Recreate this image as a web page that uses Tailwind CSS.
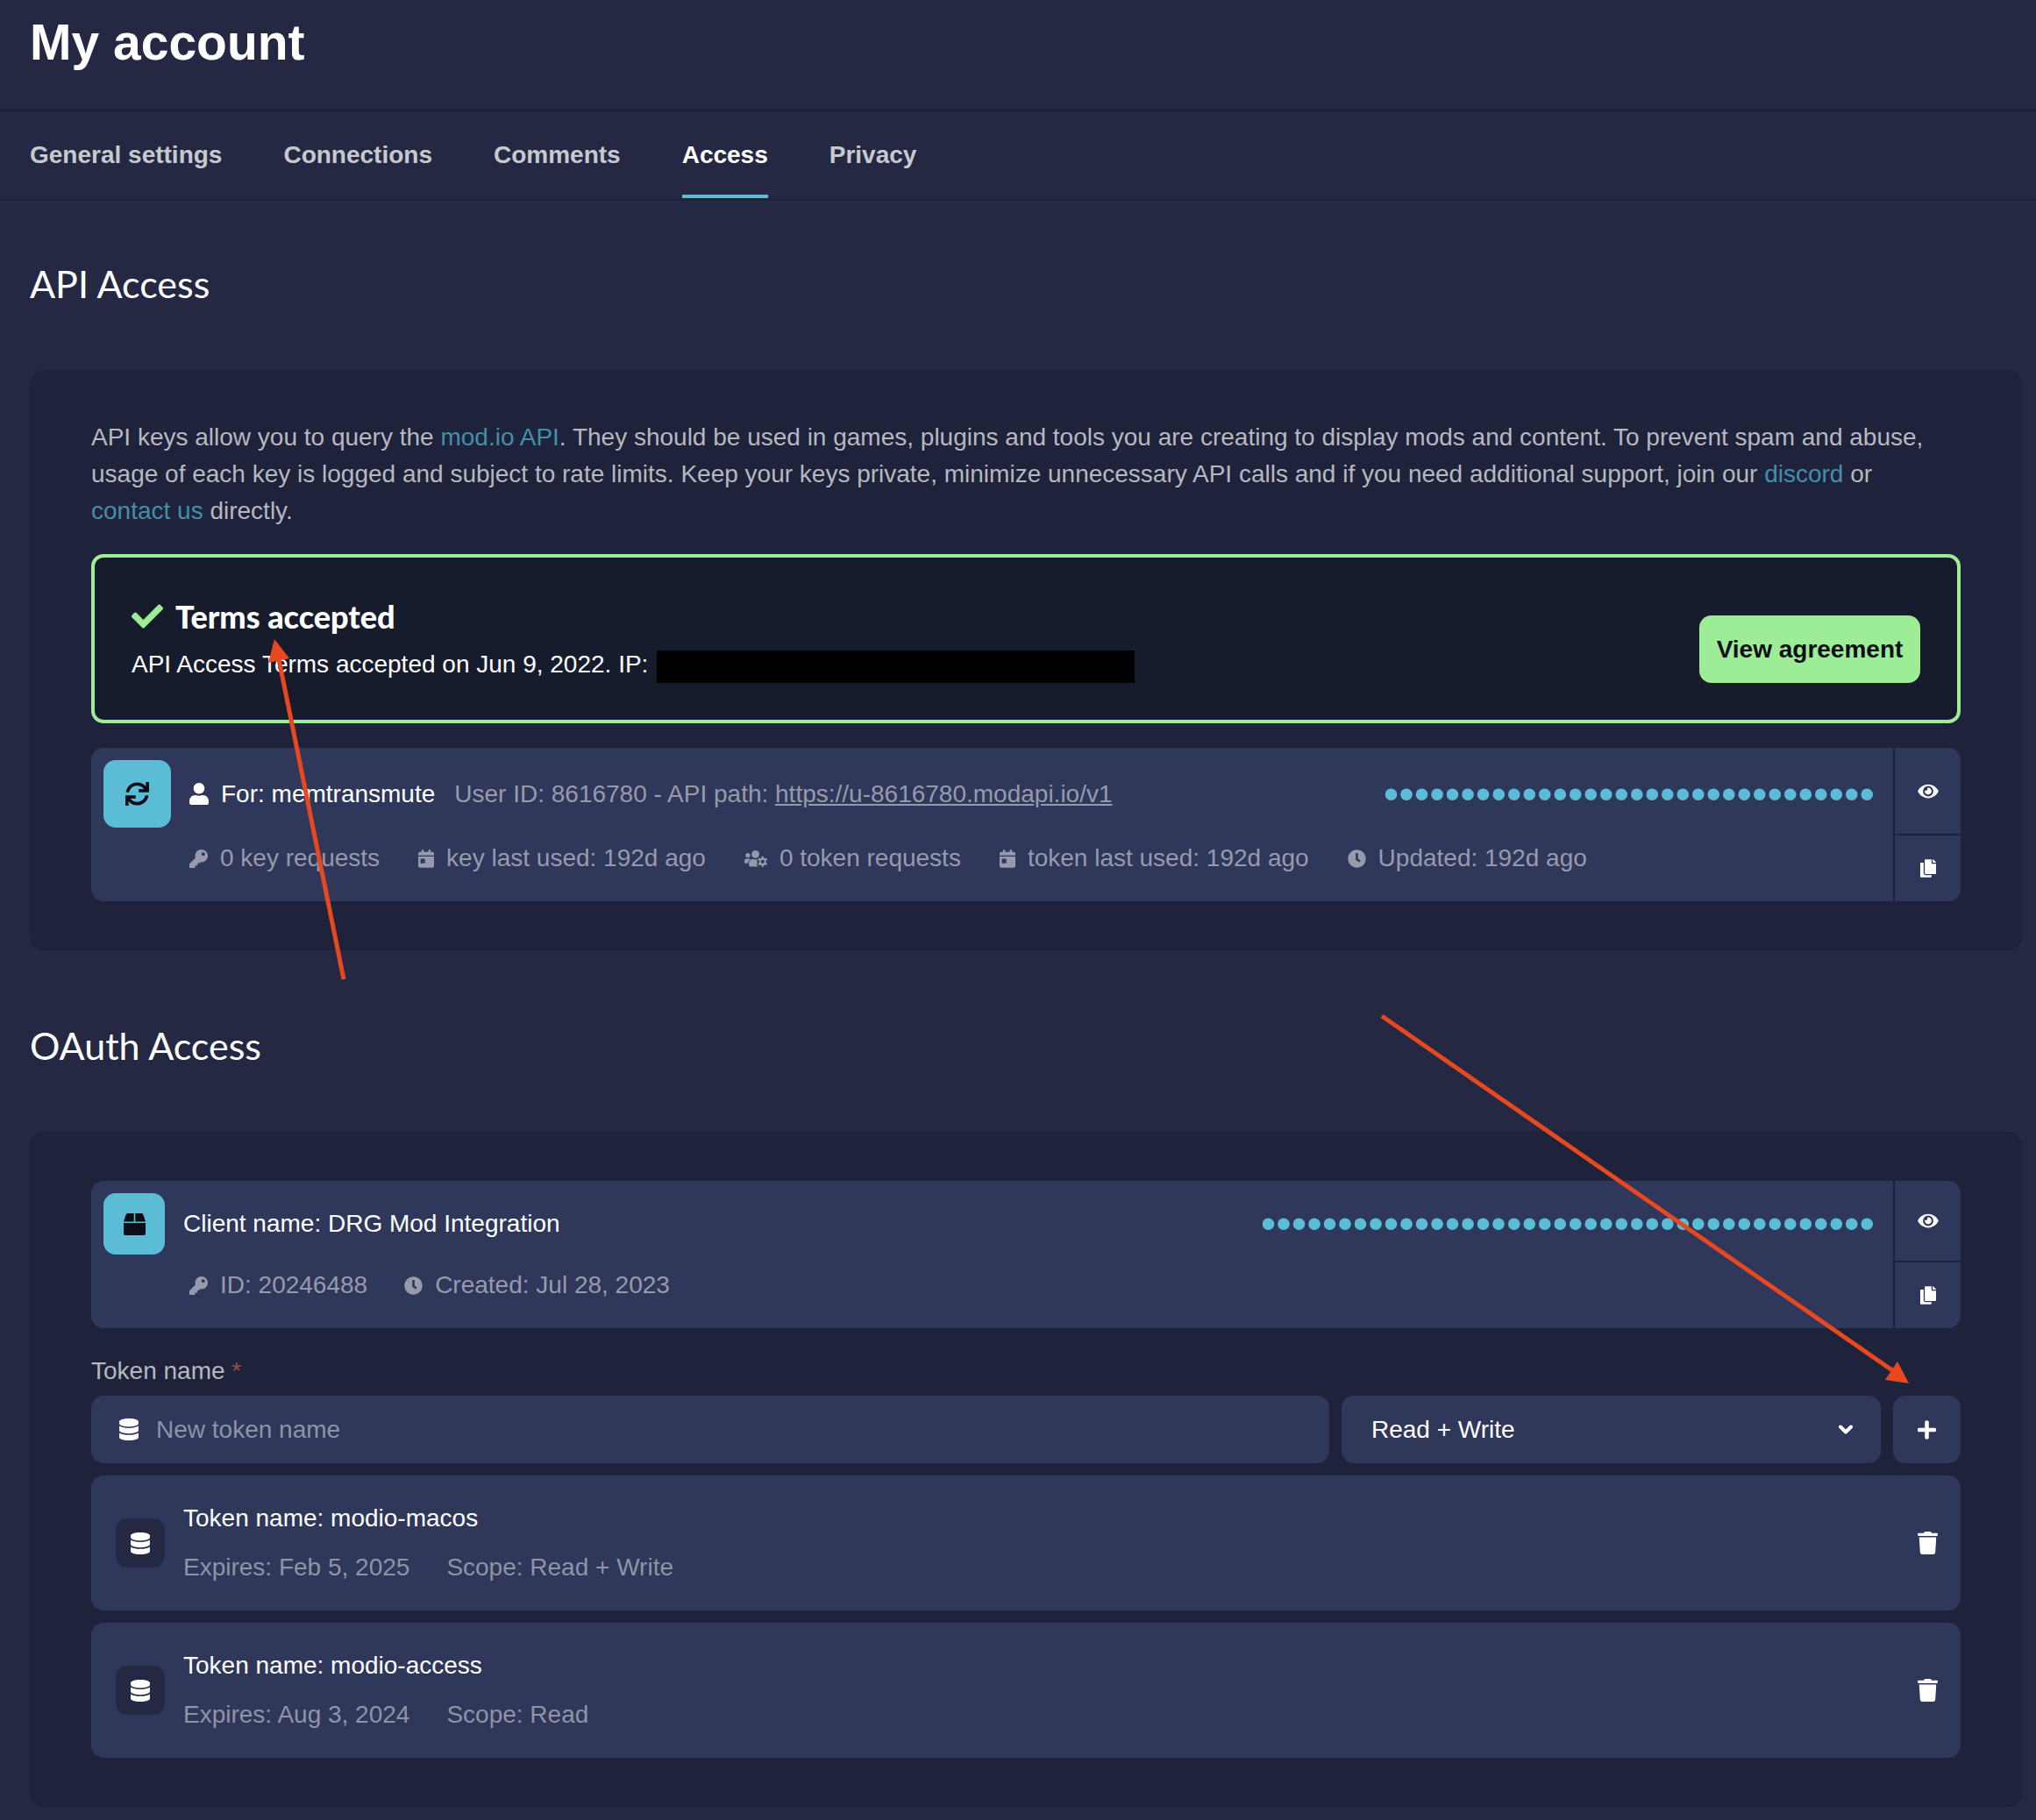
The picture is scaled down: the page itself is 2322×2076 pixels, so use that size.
<!DOCTYPE html>
<html lang="en" class="bg-[#242842]">
<head>
<meta charset="utf-8">
<meta name="viewport" content="width=device-width, initial-scale=1">
<title>My account</title>
<script src="https://cdn.jsdelivr.net/npm/@tailwindcss/browser@4"></script>
</head>
<body class="relative bg-[#242842] pb-[15px] font-['Liberation_Sans',Arial,sans-serif] text-[28px] leading-[42px] text-white">

<!-- Icon set -->
<svg class="hidden" aria-hidden="true">
  <symbol id="check" viewBox="0 0 512 512"><path d="M173.898 439.404l-166.4-166.4c-9.997-9.997-9.997-26.206 0-36.204l36.203-36.204c9.997-9.998 26.207-9.998 36.204 0L192 312.69 432.095 72.596c9.997-9.997 26.207-9.997 36.204 0l36.203 36.204c9.997 9.997 9.997 26.206 0 36.204l-294.4 294.401c-9.998 9.997-26.207 9.997-36.204-.001z"/></symbol>
  <symbol id="sync" viewBox="0 0 512 512"><path d="M440.65 12.57l4 82.77A247.16 247.16 0 0 0 255.83 8C134.73 8 33.91 94.92 12.29 209.82A12 12 0 0 0 24.09 224h49.05a12 12 0 0 0 11.67-9.26 175.91 175.91 0 0 1 317-56.94l-101.46-4.86a12 12 0 0 0-12.57 12v47.41a12 12 0 0 0 12 12H500a12 12 0 0 0 12-12V12a12 12 0 0 0-12-12h-47.37a12 12 0 0 0-11.98 12.57zM255.83 432a175.61 175.61 0 0 1-146-77.8l101.8 4.87a12 12 0 0 0 12.57-12v-47.4a12 12 0 0 0-12-12H12a12 12 0 0 0-12 12V500a12 12 0 0 0 12 12h47.35a12 12 0 0 0 12-12.6l-4.15-82.57A247.17 247.17 0 0 0 255.83 504c121.11 0 221.93-86.92 243.55-201.82a12 12 0 0 0-11.8-14.18h-49.05a12 12 0 0 0-11.67 9.26A175.86 175.86 0 0 1 255.83 432z"/></symbol>
  <symbol id="user" viewBox="0 0 448 512"><path d="M224 256c70.7 0 128-57.3 128-128S294.7 0 224 0 96 57.3 96 128s57.3 128 128 128zm89.600 32h-16.700c-22.200 10.200-46.900 16-72.900 16s-50.600-5.800-72.900-16h-16.700C60.200 288 0 348.200 0 422.400V464c0 26.500 21.500 48 48 48h352c26.500 0 48-21.500 48-48v-41.600c0-74.200-60.200-134.400-134.400-134.400z"/></symbol>
  <symbol id="key" viewBox="0 0 512 512"><path d="M512 176.001C512 273.203 433.202 352 336 352c-11.220 0-22.190-1.062-32.827-3.069l-24.012 27.014A23.999 23.999 0 0 1 261.223 384H224v40c0 13.255-10.745 24-24 24h-40v40c0 13.255-10.745 24-24 24H24c-13.255 0-24-10.745-24-24v-78.059c0-6.365 2.529-12.470 7.029-16.971l161.802-161.802C163.108 213.814 160 195.271 160 176 160 78.798 238.797.001 335.999 0 433.488-.001 512 78.511 512 176.001zM336 128c0 26.510 21.490 48 48 48s48-21.490 48-48-21.490-48-48-48-48 21.490-48 48z"/></symbol>
  <symbol id="calendar" viewBox="0 0 448 512"><path d="M0 464c0 26.500 21.500 48 48 48h352c26.500 0 48-21.500 48-48V192H0v272zm64-192c0-8.800 7.200-16 16-16h96c8.800 0 16 7.200 16 16v96c0 8.800-7.200 16-16 16H80c-8.800 0-16-7.200-16-16v-96zM400 64h-48V16c0-8.800-7.200-16-16-16h-32c-8.800 0-16 7.200-16 16v48H160V16c0-8.800-7.200-16-16-16h-32c-8.800 0-16 7.200-16 16v48H48C21.500 64 0 85.500 0 112v48h448v-48c0-26.500-21.500-48-48-48z"/></symbol>
  <symbol id="users-cog" viewBox="0 0 640 512"><circle cx="96" cy="160" r="64"/><circle cx="310" cy="128" r="108"/><path d="M64 256h64c18 0 34 7 45 19-40 22-69 62-75 109H32c-18 0-32-14-32-32v-32c0-35 29-64 64-64z"/><path d="M243 266h9c43 21 83 21 120 4-14 14-22 34-20 52 6 14 8 20 14 26-4 10-4 20 0 30-18 14-26 34-14 56 10 20 22 36 36 46H176c-27 0-48-21-48-48v-51c0-64 52-115 115-115z"/><path fill-rule="evenodd" d="M484 190h52l8 46 26 14 44-16 26 46-36 30v56l36 30-26 46-44-16-26 14-8 46h-52l-8-46-26-14-44 16-26-46 36-30v-56l-36-30 26-46 44 16 26-14zM510 286a52 52 0 1 0 0 104 52 52 0 0 0 0-104z"/></symbol>
  <symbol id="clock" viewBox="0 0 512 512"><path d="M256,8C119,8,8,119,8,256S119,504,256,504,504,393,504,256,393,8,256,8Zm92.490,313h0l-20,25a16,16,0,0,1-22.490,2.500h0l-67-49.720a40,40,0,0,1-15-31.230V112a16,16,0,0,1,16-16h32a16,16,0,0,1,16,16V256l58,42.500A16,16,0,0,1,348.490,321Z"/></symbol>
  <symbol id="eye" viewBox="0 0 576 512"><path d="M572.520 241.400C518.290 135.590 410.930 64 288 64S57.680 135.640 3.480 241.410a32.350 32.350 0 0 0 0 29.190C57.710 376.410 165.070 448 288 448s230.320-71.640 284.520-177.410a32.350 32.350 0 0 0 0-29.190zM288 400a144 144 0 1 1 144-144 143.930 143.930 0 0 1-144 144zm0-240a95.310 95.310 0 0 0-25.310 3.790 47.850 47.850 0 0 1-66.900 66.900A95.780 95.780 0 1 0 288 160z"/></symbol>
  <symbol id="copy" viewBox="0 0 448 512"><path d="M320 448v40c0 13.255-10.745 24-24 24H24c-13.255 0-24-10.745-24-24V120c0-13.255 10.745-24 24-24h72v296c0 30.879 25.121 56 56 56h168zm0-344V0H152c-13.255 0-24 10.745-24 24v368c0 13.255 10.745 24 24 24h272c13.255 0 24-10.745 24-24V128H344c-13.200 0-24-10.800-24-24zm120.971-31.029L375.029 7.029A24 24 0 0 0 358.059 0H352v96h96v-6.059a24 24 0 0 0-7.029-16.970z"/></symbol>
  <symbol id="box" viewBox="0 0 512 512"><path d="M509.500 184.600L458.900 32.800C452.400 13.200 434.100 0 413.400 0H272v192h238.700c-.4-2.500-.4-5-1.200-7.400zM240 0H98.600c-20.700 0-39 13.200-45.500 32.800L2.500 184.600c-.8 2.400-.8 4.900-1.200 7.400H240V0zM0 224v240c0 26.500 21.500 48 48 48h416c26.500 0 48-21.500 48-48V224H0z"/></symbol>
  <symbol id="database" viewBox="0 0 448 512"><path d="M448 73.143v45.714C448 159.143 347.667 192 224 192S0 159.143 0 118.857V73.143C0 32.857 100.333 0 224 0s224 32.857 224 73.143zM448 176v102.857C448 319.143 347.667 352 224 352S0 319.143 0 278.857V176c48.125 33.143 136.208 48.572 224 48.572S399.874 209.143 448 176zm0 160v102.857C448 479.143 347.667 512 224 512S0 479.143 0 438.857V336c48.125 33.143 136.208 48.572 224 48.572S399.874 369.143 448 336z"/></symbol>
  <symbol id="trash" viewBox="0 0 448 512"><path d="M432 32H312l-9.400-18.700A24 24 0 0 0 281.100 0H166.800a23.720 23.720 0 0 0-21.400 13.300L136 32H16A16 16 0 0 0 0 48v32a16 16 0 0 0 16 16h416a16 16 0 0 0 16-16V48a16 16 0 0 0-16-16zM53.200 467a48 48 0 0 0 47.900 45h245.800a48 48 0 0 0 47.900-45L416 128H32z"/></symbol>
  <symbol id="plus" viewBox="0 0 448 512"><path d="M416 208H272V64c0-17.670-14.330-32-32-32h-32c-17.670 0-32 14.330-32 32v144H32c-17.670 0-32 14.330-32 32v32c0 17.670 14.330 32 32 32h144v144c0 17.670 14.330 32 32 32h32c17.670 0 32-14.330 32-32V304h144c17.670 0 32-14.330 32-32v-32c0-17.670-14.330-32-32-32z"/></symbol>
</svg>

<header class="px-[34px] pt-4 pb-11">
  <h1 class="text-[57px] leading-[64px] font-bold">My account</h1>
</header>

<nav class="flex gap-[70px] border-t-4 border-b-[3px] border-[#1e223b] px-[34px] font-bold text-[#c8c9d0]">
  <a href="#" class="pt-7 pb-7">General settings</a>
  <a href="#" class="pt-7 pb-7">Connections</a>
  <a href="#" class="pt-7 pb-7">Comments</a>
  <a href="#" class="border-b-4 border-[#5bbcd6] pt-7 pb-6 text-white" aria-current="page">Access</a>
  <a href="#" class="pt-7 pb-7">Privacy</a>
</nav>

<main class="pr-4 pl-[34px]">
  <section class="pt-[70px]">
    <h2 class="mb-[73px] font-[Lato,sans-serif] text-[43px] leading-[50px]">API Access</h2>

    <div class="rounded-2xl bg-[#1e223b] px-[70px] py-14">
      <p class="pr-4 text-[#b7b8bf]">API keys allow you to query the <a href="#" class="text-[#448fa8]">mod.io API</a>. They should be used in games, plugins and tools you are creating to display mods and content. To prevent spam and abuse, usage of each key is logged and subject to rate limits. Keep your keys private, minimize unnecessary API calls and if you need additional support, join our <a href="#" class="text-[#448fa8]">discord</a> or <a href="#" class="text-[#448fa8]">contact us</a> directly.</p>

      <div class="mt-7 flex items-end justify-between rounded-[14px] border-4 border-[#9ded97] bg-[#171c2d] p-[42px]">
        <div>
          <h3 class="mb-[9px] flex items-center gap-[14px] font-[Lato,sans-serif] text-[36px] leading-[50px] font-black">
            <svg class="size-9 fill-[#9ded97]"><use href="#check"/></svg>Terms accepted
          </h3>
          <p class="flex items-center gap-[10px]">API Access Terms accepted on Jun 9, 2022. IP: <span class="mt-1 h-[37px] w-[545px] bg-black"></span></p>
        </div>
        <button class="h-[77px] w-[252px] rounded-[14px] bg-[#9ded97] font-bold text-[#0c0f17]">View agreement</button>
      </div>

      <article class="mt-7 flex gap-[2px] overflow-hidden rounded-[14px]">
        <div class="flex grow flex-col gap-[14px] bg-[#2f375a] p-[14px] pb-7">
          <div class="flex items-center">
            <button class="mr-[21px] grid size-[77px] place-items-center rounded-[14px] bg-[#5bbcd6]" aria-label="Regenerate key"><svg class="size-[27px] fill-[#0c0f17]"><use href="#sync"/></svg></button>
            <svg class="mr-[14px] h-[25px] w-[22px] fill-white"><use href="#user"/></svg>
            <span class="mr-[22px]">For: memtransmute</span>
            <span class="text-[#979aac]">User ID: 8616780 - API path: <a href="#" class="underline">https://u-8616780.modapi.io/v1</a></span>
            <input type="password" readonly aria-label="API key" value="00000000000000000000000000000000" class="mr-[7px] ml-auto h-[70px] w-[580px] text-right text-[50px] leading-[70px] text-[#5bbcd6]">
          </div>
          <ul class="flex gap-[44px] pl-[98px] text-[#979aac]">
            <li class="flex items-center gap-[14px]"><svg class="size-[21px] fill-current"><use href="#key"/></svg>0 key requests</li>
            <li class="flex items-center gap-[14px]"><svg class="h-[21px] w-[18px] fill-current"><use href="#calendar"/></svg>key last used: 192d ago</li>
            <li class="flex items-center gap-[14px]"><svg class="h-[21px] w-[26px] fill-current"><use href="#users-cog"/></svg>0 token requests</li>
            <li class="flex items-center gap-[14px]"><svg class="h-[21px] w-[18px] fill-current"><use href="#calendar"/></svg>token last used: 192d ago</li>
            <li class="flex items-center gap-[14px]"><svg class="size-[21px] fill-current"><use href="#clock"/></svg>Updated: 192d ago</li>
          </ul>
        </div>
        <div class="flex w-[75px] flex-col gap-[2px]">
          <button class="grid grow place-items-center bg-[#2f375a]" aria-label="Show key"><svg class="h-[21px] w-6 fill-white"><use href="#eye"/></svg></button>
          <button class="grid h-[75px] place-items-center bg-[#2f375a]" aria-label="Copy key"><svg class="h-[21px] w-[18px] fill-white"><use href="#copy"/></svg></button>
        </div>
      </article>
    </div>
  </section>

  <section class="pt-21">
    <h2 class="mb-[73px] font-[Lato,sans-serif] text-[43px] leading-[50px]">OAuth Access</h2>

    <div class="rounded-2xl bg-[#1e223b] px-[70px] py-14">
      <article class="flex gap-[2px] overflow-hidden rounded-[14px]">
        <div class="flex grow flex-col gap-[14px] bg-[#2f375a] p-[14px] pb-7">
          <div class="flex items-center gap-[21px]">
            <div class="grid size-[70px] place-items-center rounded-[14px] bg-[#5bbcd6]"><svg class="size-[25px] fill-[#0c0f17]"><use href="#box"/></svg></div>
            <span>Client name: DRG Mod Integration</span>
            <input type="password" readonly aria-label="Client secret" value="0000000000000000000000000000000000000000" class="mr-[7px] ml-auto h-[70px] w-[720px] text-right text-[50px] leading-[70px] text-[#5bbcd6]">
          </div>
          <ul class="flex gap-[42px] pl-[98px] text-[#979aac]">
            <li class="flex items-center gap-[14px]"><svg class="size-[21px] fill-current"><use href="#key"/></svg>ID: 20246488</li>
            <li class="flex items-center gap-[14px]"><svg class="size-[21px] fill-current"><use href="#clock"/></svg>Created: Jul 28, 2023</li>
          </ul>
        </div>
        <div class="flex w-[75px] flex-col gap-[2px]">
          <button class="grid grow place-items-center bg-[#2f375a]" aria-label="Show secret"><svg class="h-[21px] w-6 fill-white"><use href="#eye"/></svg></button>
          <button class="grid h-[75px] place-items-center bg-[#2f375a]" aria-label="Copy secret"><svg class="h-[21px] w-[18px] fill-white"><use href="#copy"/></svg></button>
        </div>
      </article>

      <form class="mt-7">
        <label for="token-name" class="block text-[#b7b8bf]">Token name <span class="text-[#934d52]">*</span></label>
        <div class="mt-[7px] flex gap-[14px]">
          <div class="flex h-[77px] flex-1 items-center gap-5 rounded-[14px] bg-[#2f375a] pl-8">
            <svg class="h-[25px] w-[22px] fill-white"><use href="#database"/></svg>
            <input id="token-name" type="text" placeholder="New token name" class="h-full min-w-0 grow bg-transparent outline-none placeholder:text-[#8f93a6]">
          </div>
          <div class="relative w-[615px]">
            <select aria-label="Token scope" class="h-[77px] w-full appearance-none rounded-[14px] bg-[#2f375a] px-[34px] text-white">
              <option>Read + Write</option>
              <option>Read</option>
            </select>
            <svg viewBox="0 0 16 11" class="pointer-events-none absolute top-[33px] right-8 h-[11px] w-4 fill-none stroke-white stroke-[4]" stroke-linecap="round" stroke-linejoin="round"><path d="M2 2.500l6 6 6-6"/></svg>
          </div>
          <button type="button" class="grid size-[77px] place-items-center rounded-[14px] bg-[#2f375a]" aria-label="Add token"><svg class="h-6 w-[21px] fill-white"><use href="#plus"/></svg></button>
        </div>
      </form>

      <ul class="mt-[14px] flex flex-col gap-[14px]">
        <li class="flex items-center gap-[21px] rounded-[14px] bg-[#2f375a] py-7 pr-[26px] pl-7">
          <div class="grid size-14 place-items-center rounded-[14px] bg-[#242842]"><svg class="h-[25px] w-[22px] fill-white"><use href="#database"/></svg></div>
          <div class="flex grow flex-col gap-[14px]">
            <span>Token name: modio-macos</span>
            <div class="flex gap-[42px] text-[#8f93a6]"><span>Expires: Feb 5, 2025</span><span>Scope: Read + Write</span></div>
          </div>
          <button aria-label="Delete modio-macos"><svg class="h-[26px] w-[23px] fill-white"><use href="#trash"/></svg></button>
        </li>
        <li class="flex items-center gap-[21px] rounded-[14px] bg-[#2f375a] py-7 pr-[26px] pl-7">
          <div class="grid size-14 place-items-center rounded-[14px] bg-[#242842]"><svg class="h-[25px] w-[22px] fill-white"><use href="#database"/></svg></div>
          <div class="flex grow flex-col gap-[14px]">
            <span>Token name: modio-access</span>
            <div class="flex gap-[42px] text-[#8f93a6]"><span>Expires: Aug 3, 2024</span><span>Scope: Read</span></div>
          </div>
          <button aria-label="Delete modio-access"><svg class="h-[26px] w-[23px] fill-white"><use href="#trash"/></svg></button>
        </li>
      </ul>
    </div>
  </section>
</main>

<!-- Annotation arrows laid over the page -->
<svg viewBox="0 0 100 400" class="pointer-events-none absolute top-[724px] left-[300px] h-[400px] w-[100px]" aria-hidden="true">
  <path d="M92 393L18 28" fill="none" stroke="#e84820" stroke-width="5"/>
  <path d="M13 5L6 32L30 27z" fill="#e84820"/>
</svg>
<svg viewBox="0 0 622 430" class="pointer-events-none absolute top-[1153px] right-[130px] h-[430px] w-[622px]" aria-hidden="true">
  <path d="M6 6L588 410" fill="none" stroke="#e84820" stroke-width="5"/>
  <path d="M607 425L594 400L580 421z" fill="#e84820"/>
</svg>
</body>
</html>
